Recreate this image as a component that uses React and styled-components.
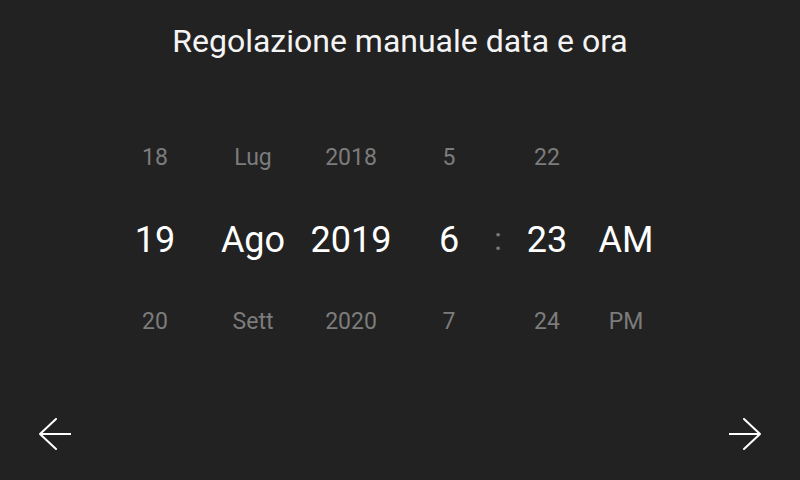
import React from 'react';
import styled, { createGlobalStyle } from 'styled-components';

const GlobalStyle = createGlobalStyle`
  html, body {
    margin: 0;
    padding: 0;
    background: #222222;
  }
  body {
    font-family: Roboto, 'Liberation Sans', sans-serif;
  }
`;

const Screen = styled.div`
  width: 800px;
  height: 480px;
  display: flex;
  flex-direction: column;
  background: #222222;
  color: #ffffff;
  overflow: hidden;
`;

const Title = styled.h1`
  margin: 0;
  padding-top: 22px;
  font-size: 32px;
  line-height: 38px;
  font-weight: 400;
  text-align: center;
  color: #f4f4f4;
`;

const Picker = styled.div`
  margin-top: 56px;
  padding-left: 106px;
  display: grid;
  grid-template-columns: 98px 98px 98px 98px 0 98px 60px;
  grid-template-rows: 82px 83px 80px;
`;

const Cell = styled.div`
  display: flex;
  align-items: center;
  justify-content: center;
  white-space: nowrap;
  font-size: ${p => (p.$active ? '36px' : '23px')};
  color: ${p => (p.$active ? '#ffffff' : '#7c7c7c')};
`;

const Colon = styled(Cell)`
  font-size: 31px;
  color: #7a7a7a;
`;

const Footer = styled.div`
  margin-top: auto;
  padding: 0 39px 30px;
  display: flex;
  justify-content: space-between;
  align-items: center;
`;

const ArrowButton = styled.button`
  width: 32px;
  height: 32px;
  padding: 0;
  border: 0;
  background: none;
  cursor: pointer;
  svg {
    display: block;
  }
`;

const Arrow = ({ dir }) => (
  <svg width="32" height="32" viewBox="0 0 32 32" fill="none" stroke="#ffffff" strokeWidth="2" strokeLinecap="round" strokeLinejoin="round">
    {dir === 'left' ? (
      <path d="M32 16 H1 M17 1 L1 16 L17 31" />
    ) : (
      <path d="M0 16 H31 M15 1 L31 16 L15 31" />
    )}
  </svg>
);

const columns = [
  ['18', '19', '20'],
  ['Lug', 'Ago', 'Sett'],
  ['2018', '2019', '2020'],
  ['5', '6', '7'],
  null,
  ['22', '23', '24'],
  ['', 'AM', 'PM'],
];

const DateTime = () => (
  <>
    <GlobalStyle />
    <Screen>
      <Title>Regolazione manuale data e ora</Title>
      <Picker>
        {[0, 1, 2].map(row =>
          columns.map((col, i) =>
            col === null ? (
              <Colon key={`${row}-${i}`}>{row === 1 ? ':' : ''}</Colon>
            ) : (
              <Cell key={`${row}-${i}`} $active={row === 1}>{col[row]}</Cell>
            )
          )
        )}
      </Picker>
      <Footer>
        <ArrowButton><Arrow dir="left" /></ArrowButton>
        <ArrowButton><Arrow dir="right" /></ArrowButton>
      </Footer>
    </Screen>
  </>
);

export default DateTime;
